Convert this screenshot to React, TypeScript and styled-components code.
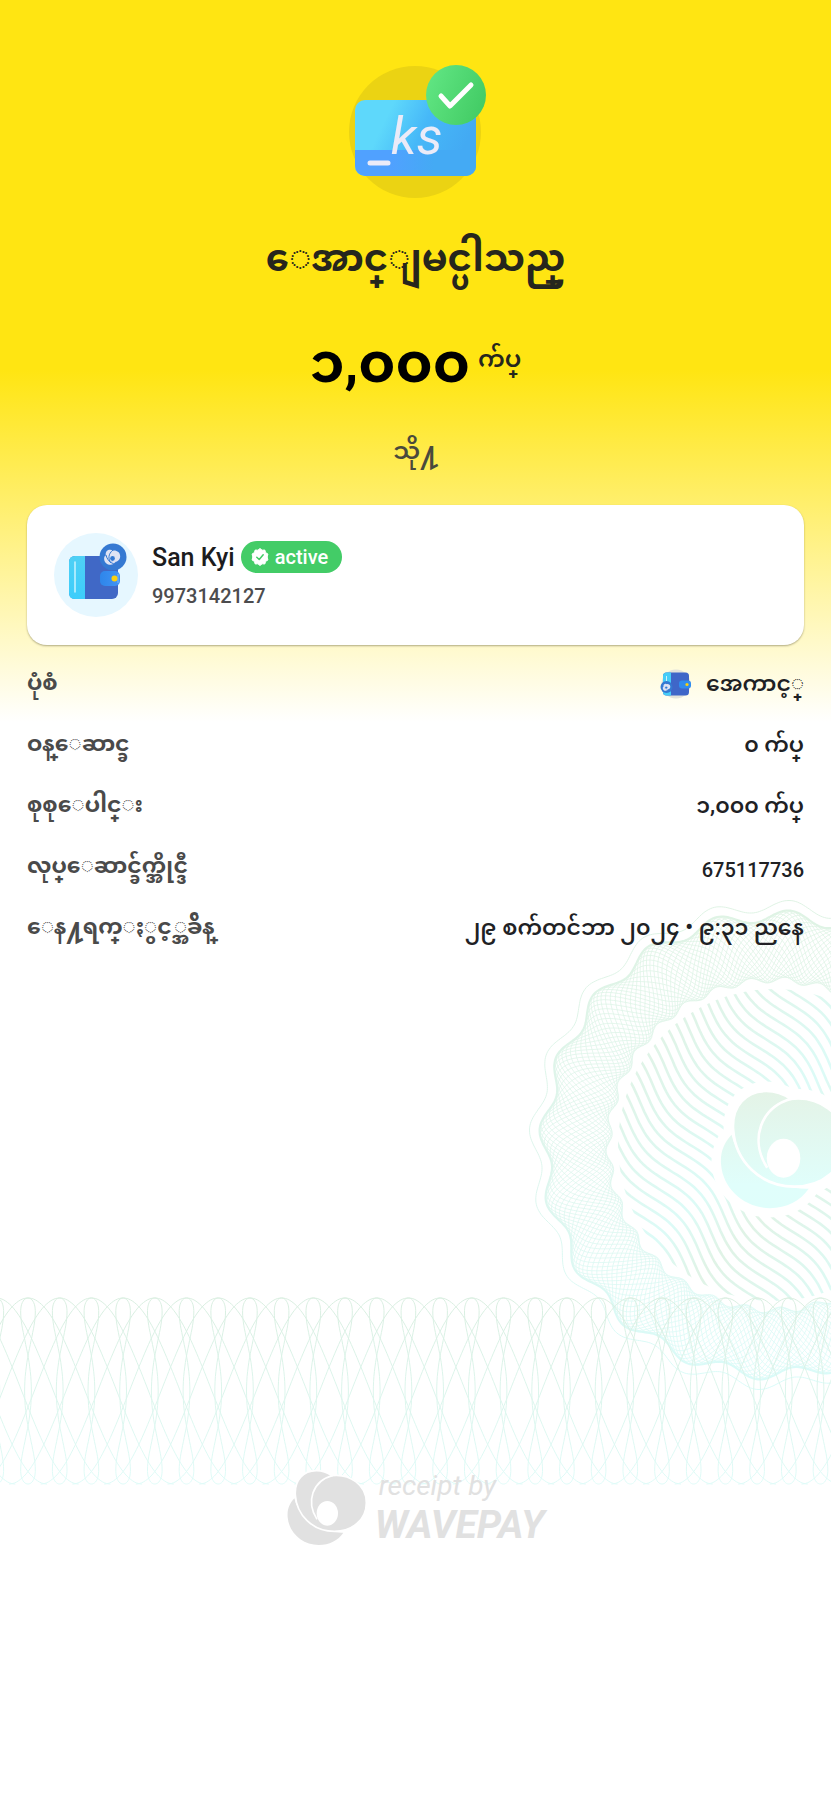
import React from 'react';
import styled, { createGlobalStyle } from 'styled-components';

const GlobalStyle = createGlobalStyle`
  *, *::before, *::after { box-sizing: border-box; }
  html, body { margin: 0; padding: 0; background: #fff; }
  h1, h2, p, dl, dt, dd { margin: 0; }
  body {
    font-family: Roboto, 'Noto Sans Myanmar', 'Noto Sans', sans-serif;
    color: #202124;
  }
`;

const Page = styled.main`
  position: relative;
  min-height: 100vh;
  overflow: hidden;
  background: linear-gradient(#ffe512 0, #ffe512 370px, #fff 722px);
`;

const Content = styled.div`
  position: relative;
  display: flex;
  flex-direction: column;
  padding: 62px 27px 0;
`;

const Hero = styled.header`
  display: flex;
  flex-direction: column;
  align-items: center;
  text-align: center;
`;

const Title = styled.h1`
  margin-top: 23px;
  font-size: 37px;
  line-height: 72px;
  font-weight: 700;
  color: #26261d;
`;

const Amount = styled.p`
  display: flex;
  align-items: flex-start;
  gap: 8px;
  margin-top: 24px;
  font-size: 56px;
  line-height: 88px;
  font-weight: 700;
  color: #000;
`;

const Unit = styled.span`
  font-size: 24px;
  line-height: 80px;
  font-weight: 600;
  color: #26261d;
`;

const Toward = styled.p`
  margin-top: 20px;
  font-size: 24px;
  line-height: 48px;
  font-weight: 600;
  color: #4a4a3c;
`;

const Recipient = styled.section`
  display: flex;
  align-items: center;
  gap: 14px;
  margin-top: 30px;
  padding: 28px 27px;
  border-radius: 20px;
  background: #fff;
  box-shadow: 0 1px 2px rgba(60, 55, 20, 0.4);
`;

const RecipientText = styled.div`
  display: flex;
  flex-direction: column;
  gap: 6px;
  padding-top: 2px;
`;

const NameLine = styled.div`
  display: flex;
  align-items: center;
  gap: 6px;
`;

const Name = styled.h2`
  padding-top: 2px;
  font-size: 25px;
  line-height: 32px;
  font-weight: 500;
  color: #1c1c1e;
`;

const Phone = styled.p`
  font-size: 20px;
  line-height: 32px;
  color: #4c4c4e;
  font-weight: 500;
`;

const Badge = styled.span`
  display: inline-flex;
  align-items: center;
  gap: 6px;
  height: 32px;
  padding: 0 14px 0 10px;
  border-radius: 16px;
  background: #43cc67;
  color: #fff;
  font-size: 20px;
  line-height: 32px;
  font-weight: 500;
`;

const Details = styled.dl`
  display: flex;
  flex-direction: column;
  gap: 21px;
  margin-top: 18px;
`;

const Row = styled.div`
  display: flex;
  justify-content: space-between;
  align-items: center;
  height: 40px;
  font-size: 22px;
  line-height: 40px;
  white-space: nowrap;
`;

const Label = styled.dt`
  color: #4a4a4a;
  font-weight: 700;
`;

const Value = styled.dd`
  display: flex;
  align-items: center;
  gap: 14px;
  padding-top: 2px;
  color: #202124;
  font-weight: 600;
`;

const Digits = styled.span`
  padding-top: 6px;
  font-size: 20px;
  font-weight: 500;
`;

const MedallionSlot = styled.div`
  position: absolute;
  top: 895px;
  right: -193px;
  width: 500px;
  height: 500px;
`;

const Band = styled.svg`
  position: relative;
  display: block;
  width: 100%;
  height: 188px;
  margin-top: 350px;
`;

const Footer = styled.footer`
  position: relative;
  display: flex;
  justify-content: center;
  align-items: flex-start;
  gap: 8px;
  margin-top: -15px;
  color: #e1e1e1;
`;

const Wordmark = styled.div`
  display: flex;
  flex-direction: column;
  font-style: italic;
`;

const ReceiptBy = styled.span`
  padding-left: 4px;
  font-size: 28px;
  line-height: 32px;
`;

const Brand = styled.span`
  font-size: 39px;
  line-height: 46px;
  font-weight: 700;
`;

const LOGO_BACK = 'M22 85C8 100 0 118 2 142C6 190 48 225 95 225C127 225 153 211 169 188C105 190 36 146 22 85Z';
const LOGO_BODY = 'M25 75C22 30 50 2 88 2C107 2 122 8 134 17C188 10 238 45 238 98C238 150 195 184 142 184C76 184 29 135 25 75Z';
const LOGO_ARC = 'M138 16C76 32 56 96 90 148';

function WaveMark({ fill, gap }: { fill: string; gap: number }) {
  return (
    <g>
      <path d={LOGO_BACK} fill={fill} />
      <path d={LOGO_BODY} fill={fill} stroke="#fff" strokeWidth={gap} />
      <path d={LOGO_ARC} fill="none" stroke="#fff" strokeWidth={gap} />
      <ellipse cx="121" cy="130" rx="32" ry="37" fill="#fff" />
    </g>
  );
}

function SuccessIcon() {
  return (
    <svg width="144" height="138" viewBox="344 62 144 138" role="img" aria-label="ks">
      <defs>
        <linearGradient id="note" x1="0" y1="0" x2="1" y2="0.3">
          <stop offset="0.3" stopColor="#5ed8fb" />
          <stop offset="0.62" stopColor="#46b8f8" />
          <stop offset="1" stopColor="#43aaf3" />
        </linearGradient>
        <linearGradient id="strip" x1="0" y1="0" x2="1" y2="0">
          <stop offset="0.3" stopColor="#50a1ff" />
          <stop offset="0.65" stopColor="#44aaf4" />
        </linearGradient>
        <linearGradient id="tick" x1="0" y1="0.3" x2="1" y2="0.7">
          <stop offset="0" stopColor="#60e582" />
          <stop offset="1" stopColor="#42cb64" />
        </linearGradient>
        <clipPath id="noteClip"><rect x="355" y="100" width="121" height="76" rx="10" /></clipPath>
      </defs>
      <circle cx="415" cy="132" r="66" fill="#ebd313" />
      <g clipPath="url(#noteClip)">
        <rect x="355" y="100" width="121" height="76" fill="url(#note)" />
        <rect x="355" y="150" width="121" height="26" fill="url(#strip)" />
      </g>
      <path d="M370 163H388" stroke="#ebebf8" strokeWidth="5" strokeLinecap="round" />
      <text x="391" y="154" fontFamily="Roboto, sans-serif" fontStyle="italic" fontSize="52" fill="#ebebf8">ks</text>
      <circle cx="456" cy="95" r="30" fill="url(#tick)" />
      <path d="M441 96L450 106L471 85" fill="none" stroke="#fff" strokeWidth="5" strokeLinecap="round" strokeLinejoin="round" />
    </svg>
  );
}

function WalletAvatar() {
  return (
    <svg width="84" height="84" viewBox="0 0 84 84" aria-hidden="true">
      <defs>
        <linearGradient id="spine" x1="0" y1="0" x2="0" y2="1">
          <stop offset="0" stopColor="#4fd0f5" />
          <stop offset="1" stopColor="#3ccdfb" />
        </linearGradient>
        <linearGradient id="clasp" x1="0" y1="0" x2="1" y2="0">
          <stop offset="0" stopColor="#2e86ea" />
          <stop offset="1" stopColor="#4193f5" />
        </linearGradient>
      </defs>
      <circle cx="42" cy="42" r="42" fill="#e6f7ff" />
      <rect x="15" y="23" width="49" height="43" rx="6" fill="#4068c6" />
      <path d="M21 23H31V66H21Q15 66 15 60V29Q15 23 21 23Z" fill="url(#spine)" />
      <path d="M21 29V59" stroke="#c9f3ff" strokeWidth="1.5" strokeLinecap="round" />
      <circle cx="59" cy="24" r="13.5" fill="#3579d2" />
      <g transform="translate(50 16.5) scale(0.068)">
        <WaveMark fill="#dfe3f4" gap={0} />
      </g>
      <path d="M59 17C54 21 54 26 57 30M52 22C54 29 58 31 63 31" fill="none" stroke="#3579d2" strokeWidth="1" />
      <circle cx="58.5" cy="25.5" r="2.4" fill="#3579d2" />
      <rect x="46" y="38" width="20" height="15" rx="5" fill="url(#clasp)" />
      <path d="M64 41V50" stroke="#7cb5fa" strokeWidth="1" />
      <circle cx="60.5" cy="45.5" r="3" fill="#fbd00f" />
    </svg>
  );
}

function WalletIcon() {
  return (
    <svg width="32" height="30" viewBox="0 0 32 30" aria-hidden="true">
      <circle cx="16" cy="15" r="14.5" fill="#e2e2da" />
      <rect x="3" y="3.5" width="26" height="23" rx="3.5" fill="#3f66c8" />
      <path d="M6 3.5H11V26.5H6Q3 26 3 23V7Q3 4 6 3.5Z" fill="#45cdf8" />
      <path d="M6.5 7V12" stroke="#c9f3ff" strokeWidth="1" />
      <circle cx="6.5" cy="18" r="6" fill="#3579d2" />
      <g transform="translate(2.7 14.6) scale(0.032)">
        <WaveMark fill="#dfe3f4" gap={0} />
      </g>
      <circle cx="6.3" cy="18.6" r="1.2" fill="#3579d2" />
      <rect x="19" y="11.5" width="12" height="8" rx="3" fill="#2f8cf0" />
      <circle cx="27" cy="15.5" r="1.6" fill="#fbd00f" />
    </svg>
  );
}

function VerifiedIcon() {
  return (
    <svg width="18" height="18" viewBox="0 0 18 18" aria-hidden="true">
      <path
        d="M9 0.5L11.1 2.2L13.8 2L14.6 4.6L16.9 6L16.2 9L16.9 12L14.6 13.4L13.8 16L11.1 15.8L9 17.5L6.9 15.8L4.2 16L3.4 13.4L1.1 12L1.8 9L1.1 6L3.4 4.6L4.2 2L6.9 2.2Z"
        fill="#fff"
        stroke="#fff"
        strokeWidth="1"
        strokeLinejoin="round"
      />
      <path d="M5.8 9.3L8.2 11.5L12.2 6.8" fill="none" stroke="#43cc67" strokeWidth="1.5" strokeLinecap="round" strokeLinejoin="round" />
    </svg>
  );
}

const TAU = Math.PI * 2;
const PHASE = (86.2 * Math.PI) / 180;

function polar(radius: (a: number) => number, steps = 720) {
  const points: string[] = [];
  for (let i = 0; i <= steps; i += 1) {
    const a = (i / steps) * TAU;
    const r = radius(a);
    points.push(`${(r * Math.cos(a)).toFixed(1)} ${(-r * Math.sin(a)).toFixed(1)}`);
  }
  return `M${points.join('L')}Z`;
}

const outerEdge = (a: number) => 229 + 6 * Math.cos(20 * (a - PHASE));
const innerEdge = (a: number) => 165 + 3 * Math.cos(30 * (a - PHASE));

const rimPath = polar((a) => outerEdge(a) + 10);
const edgePath = polar(outerEdge);
const MESH_COUNT = 26;
const meshPath = Array.from({ length: MESH_COUNT }, (_, k) =>
  polar((a) => {
    const t = (1 + Math.cos(9 * a + (k / MESH_COUNT) * TAU)) / 2;
    return outerEdge(a) * t + innerEdge(a) * (1 - t);
  }, 480),
).join('');

const stripePath = Array.from({ length: 32 }, (_, k) => {
  const v = (k - 16) * 10.5;
  const points: string[] = [];
  for (let u = -170; u <= 170; u += 5) {
    const w = v + 7 * Math.sin((u - v * 0.25) / 22);
    const c = Math.cos(0.86);
    const s = Math.sin(0.86);
    points.push(`${(u * c - w * s).toFixed(1)} ${(u * s + w * c).toFixed(1)}`);
  }
  return `M${points.join('L')}`;
}).join('');

function Medallion() {
  return (
    <svg width="500" height="500" viewBox="-250 -250 500 500" aria-hidden="true">
      <defs>
        <linearGradient id="mesh" gradientUnits="userSpaceOnUse" x1="0" y1="-245" x2="0" y2="245">
          <stop offset="0" stopColor="#dff3e4" />
          <stop offset="0.5" stopColor="#def5ec" />
          <stop offset="1" stopColor="#dafbf9" />
        </linearGradient>
        <linearGradient id="stripes" gradientUnits="userSpaceOnUse" x1="-115" y1="-115" x2="115" y2="115">
          <stop offset="0" stopColor="#e0f3e6" />
          <stop offset="0.45" stopColor="#dcfbf7" />
          <stop offset="0.62" stopColor="#e0f3e6" />
          <stop offset="1" stopColor="#dcfbf7" />
        </linearGradient>
        <linearGradient id="logoTint" gradientUnits="userSpaceOnUse" x1="0" y1="0" x2="0" y2="225">
          <stop offset="0" stopColor="#e4f3e6" />
          <stop offset="0.8" stopColor="#e0fefb" />
          <stop offset="1" stopColor="#dffefb" />
        </linearGradient>
        <clipPath id="disc"><circle r="156" /></clipPath>
      </defs>
      <g fill="none" stroke="url(#mesh)">
        <path d={rimPath} strokeWidth="1" />
        <path d={edgePath} strokeWidth="2" />
        <path d={meshPath} strokeWidth="0.8" />
      </g>
      <g clipPath="url(#disc)">
        <path d={stripePath} fill="none" stroke="url(#stripes)" strokeWidth="2.6" />
      </g>
      <g transform="translate(-54 -55) scale(0.525)">
        <path d={`${LOGO_BACK}${LOGO_BODY}`} fill="#fff" stroke="#fff" strokeWidth="36" strokeLinejoin="round" />
        <WaveMark fill="url(#logoTint)" gap={5} />
      </g>
    </svg>
  );
}

const PITCH = 31.7;
const bandPath = (() => {
  const mid = 94;
  const amp = 93;
  const parts: string[] = [];
  for (let k = -8; k < 60; k += 1) {
    const x0 = 28 + k * PITCH;
    [1, -1].forEach((side) => {
      const wide: string[] = [];
      const narrow: string[] = [];
      for (let i = 0; i <= 60; i += 1) {
        const t = (i / 60) * Math.PI;
        const y = (mid - amp * Math.cos(t)).toFixed(1);
        wide.push(`${(x0 + side * (t / Math.PI) * 3.6 * PITCH).toFixed(1)} ${y}`);
        narrow.push(`${(x0 + side * (2.6 * Math.sin(t) + 6 * Math.sin(3 * t))).toFixed(1)} ${y}`);
      }
      parts.push(`M${wide.join('L')}`, `M${narrow.join('L')}`);
    });
  }
  return parts.join('');
})();

function GuillocheBand() {
  return (
    <Band aria-hidden="true">
      <defs>
        <linearGradient id="band" gradientUnits="userSpaceOnUse" x1="0" y1="0" x2="0" y2="188">
          <stop offset="0" stopColor="#d9eee0" />
          <stop offset="0.5" stopColor="#dcf5ec" />
          <stop offset="1" stopColor="#dffbf8" />
        </linearGradient>
      </defs>
      <path d={bandPath} fill="none" stroke="url(#band)" strokeWidth="1" />
    </Band>
  );
}

const rows: { label: string; value: string; icon?: boolean; latin?: boolean }[] = [
  { label: 'ပုံစံ', value: 'အေကာင့္', icon: true },
  { label: 'ဝန္ေဆာင္ခ', value: '၀ က်ပ္' },
  { label: 'စုစုေပါင္း', value: '၁,၀၀၀ က်ပ္' },
  { label: 'လုပ္ေဆာင္ခ်က္အိုင္ဒီ', value: '675117736', latin: true },
  { label: 'ေန႔ရက္ႏ\u103Dင့္အခ်ိန္', value: '၂၉ စက်တင်ဘာ ၂၀၂၄ • ၉:၃၁ ညနေ' },
];

export default function App() {
  return (
    <>
      <GlobalStyle />
      <Page lang="my">
        <MedallionSlot>
          <Medallion />
        </MedallionSlot>
        <Content>
          <Hero>
            <SuccessIcon />
            <Title>ေအာင္ျမင္ပါသည္</Title>
            <Amount>
              ၁,၀၀၀ <Unit>က်ပ္</Unit>
            </Amount>
            <Toward>သို႔</Toward>
          </Hero>
          <Recipient>
            <WalletAvatar />
            <RecipientText>
              <NameLine>
                <Name>San Kyi</Name>
                <Badge>
                  <VerifiedIcon />
                  active
                </Badge>
              </NameLine>
              <Phone>9973142127</Phone>
            </RecipientText>
          </Recipient>
          <Details>
            {rows.map((row) => (
              <Row key={row.label}>
                <Label>{row.label}</Label>
                <Value>
                  {row.icon && <WalletIcon />}
                  {row.latin ? <Digits>{row.value}</Digits> : <span>{row.value}</span>}
                </Value>
              </Row>
            ))}
          </Details>
        </Content>
        <GuillocheBand />
        <Footer>
          <svg width="80" height="76" viewBox="0 0 240 228" aria-hidden="true">
            <WaveMark fill="#e1e1e1" gap={5} />
          </svg>
          <Wordmark>
            <ReceiptBy>receipt by</ReceiptBy>
            <Brand>WAVEPAY</Brand>
          </Wordmark>
        </Footer>
      </Page>
    </>
  );
}
